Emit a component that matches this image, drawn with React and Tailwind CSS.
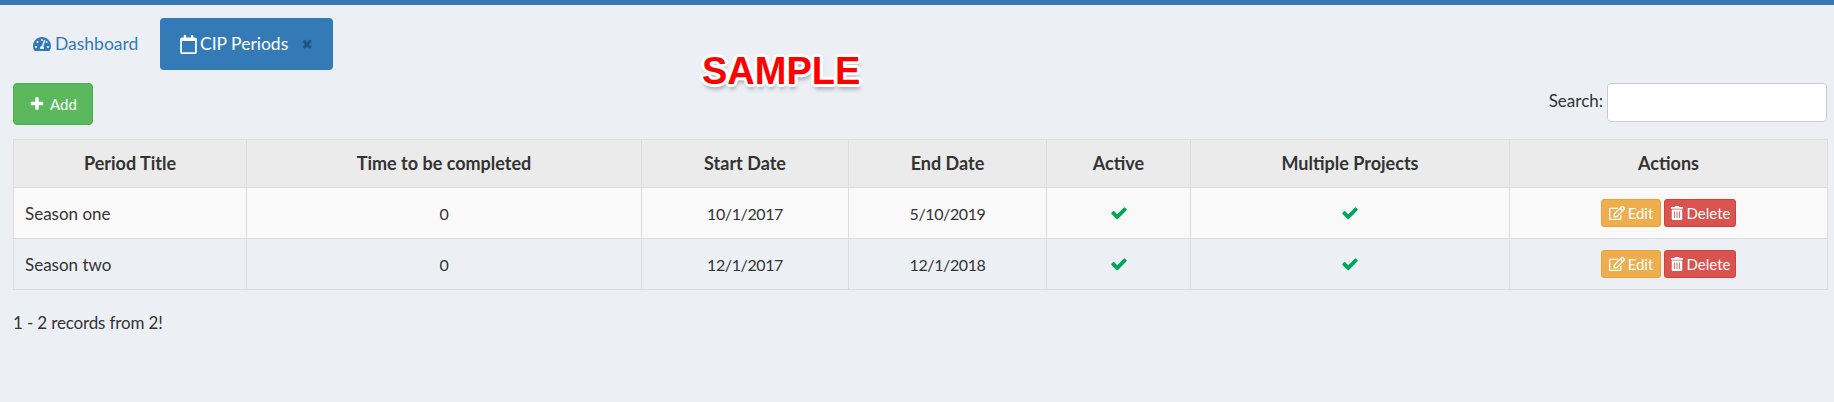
import React from "react";
import { FaTachometerAlt, FaRegCalendar, FaRegEdit, FaTrashAlt } from "react-icons/fa";

const rows = [
  ["Season one", "0", "10/1/2017", "5/10/2019"],
  ["Season two", "0", "12/1/2017", "12/1/2018"],
];
const heads = ["Period Title", "Time to be completed", "Start Date", "End Date", "Active", "Multiple Projects", "Actions"];
const widths = ["w-[233px]", "w-[395px]", "w-[207px]", "w-[198px]", "w-[144px]", "w-[319px]", "w-[318px]"];

const Fa4 = ({ d, className }) => (
  <svg viewBox="0 0 1792 1792" fill="currentColor" className={className}><path d={d} /></svg>
);
const CHECK = "M1671 566q0 40-28 68l-724 724-136 136q-28 28-68 28t-68-28l-136-136-362-362q-28-28-28-68t28-68l136-136q28-28 68-28t68 28l294 295 656-657q28-28 68-28t68 28l136 136q28 28 28 68z";
const PLUS = "M1600 736v192q0 40-28 68t-68 28h-416v416q0 40-28 68t-68 28h-192q-40 0-68-28t-28-68v-416h-416q-40 0-68-28t-28-68v-192q0-40 28-68t68-28h416v-416q0-40 28-68t68-28h192q40 0 68 28t28 68v416h416q40 0 68 28t28 68z";
const TIMES = "M1298 1214q0 40-28 68l-136 136q-28 28-68 28t-68-28l-294-294-294 294q-28 28-68 28t-68-28l-136-136q-28-28-28-68t28-68l294-294-294-294q-28-28-28-68t28-68l136-136q28-28 68-28t68 28l294 294 294-294q28-28 68-28t68 28l136 136q28 28 28 68t-28 68l-294 294 294 294q28 28 28 68z";

function Row({ r, odd }) {
  const td = "border border-[#dddddd] p-0 h-[51px] text-center align-middle";
  const num = td + " pt-[1px] text-[16px] tracking-[-0.4px]";
  const check = <Fa4 d={CHECK} className="block mx-auto w-[18px] h-[18px] text-[#00a65a]" />;
  return (
    <tr className={odd ? "bg-[#f9f9f9]" : "bg-[#ecf0f5]"}>
      <td className="border border-[#dddddd] pl-[11px] pt-[1px] h-[51px] text-left align-middle">{r[0]}</td>
      <td className={num}>{r[1]}</td>
      <td className={num}>{r[2]}</td>
      <td className={num}>{r[3]}</td>
      <td className={td}>{check}</td>
      <td className={td}>{check}</td>
      <td className={td}>
        <span className="inline-flex gap-[3px] align-middle">
          <button className="flex items-center justify-center w-[60px] h-[28px] gap-[3px] rounded-[3px] border border-[#eea236] bg-[#f0ad4e] text-white text-[15px]">
            <FaRegEdit className="text-[16px]" />Edit
          </button>
          <button className="flex items-center justify-center w-[72px] h-[28px] gap-[3px] rounded-[3px] border border-[#d43f3a] bg-[#d9534f] text-white text-[15px]">
            <FaTrashAlt className="text-[14px]" />Delete
          </button>
        </span>
      </td>
    </tr>
  );
}

export default function App() {
  return (
    <div className="relative min-h-[402px] bg-[#ecf0f5] border-t-[5px] border-[#337ab7] text-[#333333] text-[17px] font-['Lato','Noto_Sans',sans-serif] overflow-hidden">
      <nav className="flex pl-[13px] pt-[13px] gap-[4px] h-[65px]">
        <a className="flex items-center h-[52px] w-[143px] pl-[20px] gap-[4px] text-[#337ab7] text-[17.5px]">
          <FaTachometerAlt className="text-[18px]" />Dashboard
        </a>
        <a className="flex items-center h-[52px] w-[173px] pl-[19px] rounded-[4px] bg-[#337ab7] text-white text-[17.5px]">
          <FaRegCalendar className="text-[19px] mr-[2px]" />CIP Periods
          <Fa4 d={TIMES} className="ml-[14px] w-[13px] h-[13px] text-[#23527c]" />
        </a>
      </nav>

      <div className="flex justify-between items-start pl-[13px] pr-[7px] pt-[13px] h-[69px]">
        <button className="flex items-center justify-center gap-[5px] w-[80px] h-[42px] rounded-[4px] border border-[#4cae4c] bg-[#5cb85c] text-white text-[15px]">
          <Fa4 d={PLUS} className="w-[16px] h-[16px]" />Add
        </button>
        <label className="flex items-center gap-[4px] h-[39px]">
          <span className="mb-[3px]">Search:</span>
          <input className="w-[220px] h-[39px] rounded-[4px] border border-[#cccccc] bg-white" />
        </label>
      </div>

      <div className="pl-[13px] pr-[7px]">
        <table className="w-full table-fixed border-collapse border border-[#dddddd]">
          <colgroup>
            {widths.map((w, i) => <col key={i} className={w} />)}
          </colgroup>
          <thead>
            <tr className="bg-[#ebebeb]">
              {heads.map((h) => (
                <th key={h} className="border border-[#dddddd] border-b-0 h-[48px] text-center font-bold text-[18px]">{h}</th>
              ))}
            </tr>
          </thead>
          <tbody>
            {rows.map((r, i) => <Row key={r[0]} r={r} odd={i === 0} />)}
          </tbody>
        </table>
        <p className="mt-[20px] tracking-[-0.15px]">1 - 2 records from 2!</p>
      </div>

      <div className="absolute left-[702px] top-[42px] font-['Liberation_Sans',Arial,sans-serif] font-bold text-[38px] leading-[48px] text-[#ff0000] [text-shadow:-3px_0_0_#fff,3px_0_0_#fff,0_-3px_0_#fff,0_3px_0_#fff,-2px_-2px_0_#fff,2px_-2px_0_#fff,-2px_2px_0_#fff,2px_2px_0_#fff,1px_5px_4px_#9aa0a8]">
        SAMPLE
      </div>
    </div>
  );
}
